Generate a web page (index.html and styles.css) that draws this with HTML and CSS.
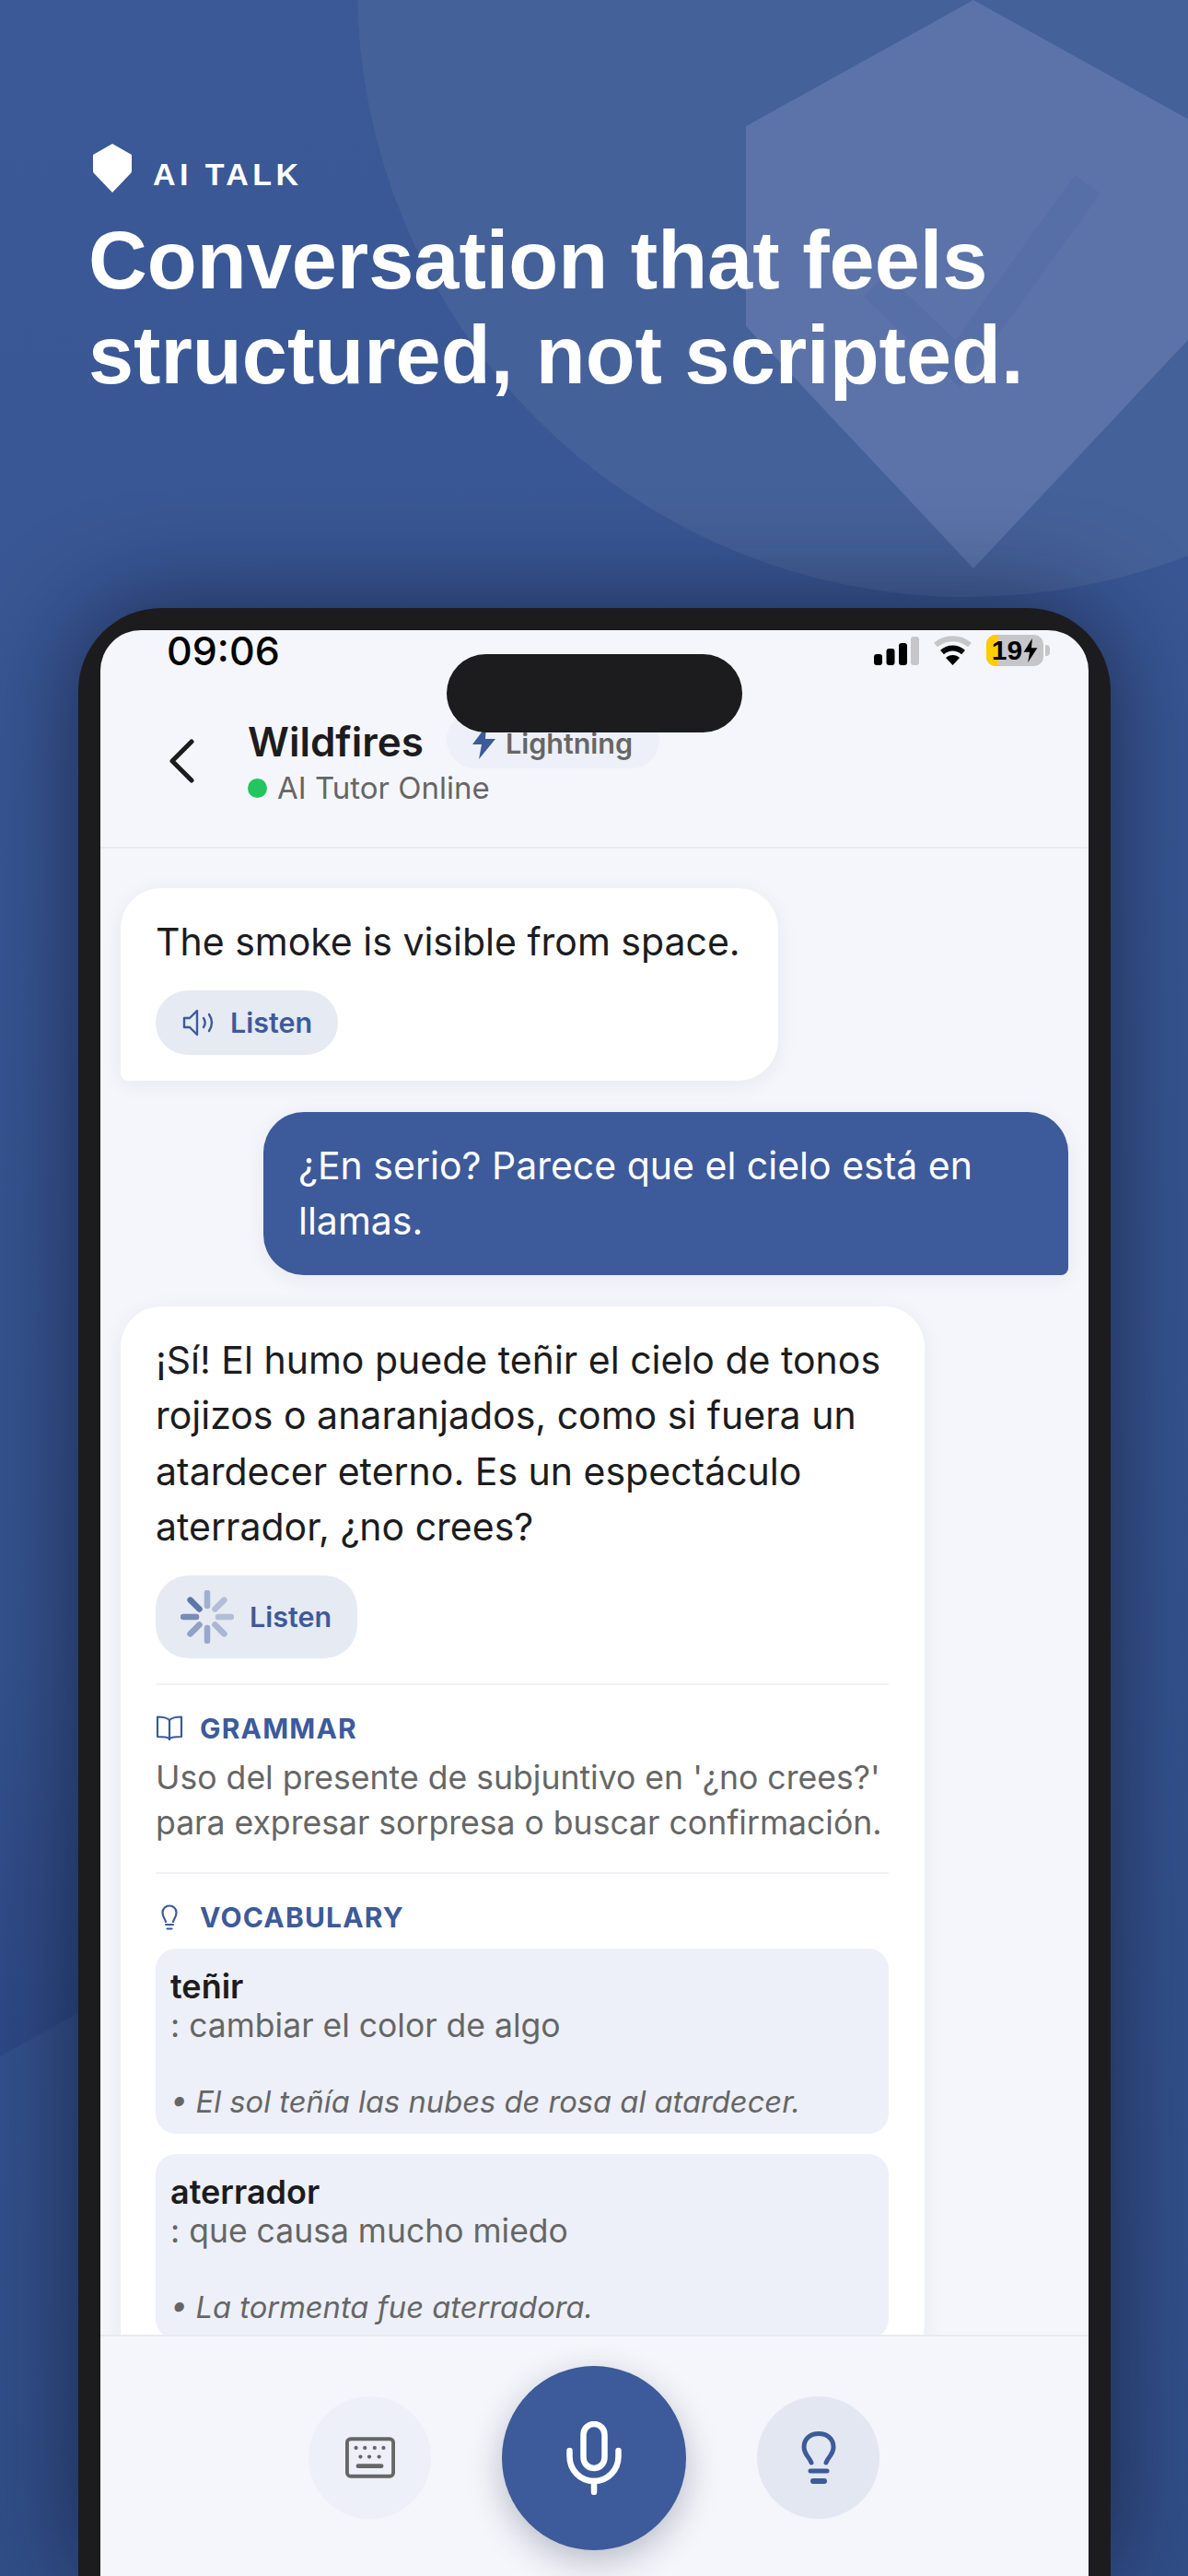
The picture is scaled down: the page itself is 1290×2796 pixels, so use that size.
FILE: index.html
```html
<!DOCTYPE html>
<html lang="en">
<head>
  <meta charset="UTF-8" />
  <meta name="viewport" content="width=device-width, initial-scale=1" />
  <title>AI Talk</title>
  <link rel="stylesheet" href="styles.css">
</head>
<body>
  <div class="poster">
    <svg class="backdrop" viewBox="0 0 1290 2796" aria-hidden="true">
      <defs>
        <linearGradient id="leftShade" x1="0" y1="0" x2="0" y2="1">
          <stop offset="0" stop-color="#2a4480" stop-opacity="0" />
          <stop offset="1" stop-color="#2a4480" stop-opacity=".6" />
        </linearGradient>
      </defs>
      <circle cx="1050" cy="-14" r="662" fill="#456199" />
      <path d="M1057 0 L1304 137 V354 L1057 617 L810 354 V137 Z" fill="#5b73a9" />
      <path d="M950 310 L1040 395 L1181 200" fill="none" stroke="#566fa6" stroke-width="34" />
      <path d="M0 1800 H85 V2185 L0 2232 Z" fill="url(#leftShade)" />
    </svg>

    <header class="hero">
      <div class="brand">
        <svg class="brand-icon" viewBox="0 0 42 53"><path d="M21 0 L42 12 V30 Q42 31 41 32 L21 53 L1 32 Q0 31 0 30 V12 Z" fill="#fff" /></svg>
        <span class="brand-name">AI TALK</span>
      </div>
      <h1>Conversation that feels<br>structured, not scripted.</h1>
    </header>

    <div class="phone">
      <div class="screen">
        <div class="island"></div>

        <div class="status">
          <span class="time">09:06</span>
          <div class="status-icons">
            <svg width="49" height="31" viewBox="0 0 49 31">
              <rect x="0" y="19" width="9" height="12" rx="3" />
              <rect x="13.500" y="13" width="9" height="18" rx="3" />
              <rect x="27" y="7" width="9" height="24" rx="3" />
              <rect x="40" y="0" width="9" height="31" rx="3" fill="#c5c5ca" />
            </svg>
            <svg width="43" height="32" viewBox="0 0 43 32">
              <path d="M3 10 C14 1 29 1 40 10" fill="none" stroke="#c5c5ca" stroke-width="6" />
              <path d="M10 18 C17 12 26 12 33 18" fill="none" stroke="#000" stroke-width="6" />
              <path d="M14 24 C18 20 25 20 29 24 L21.500 32 Z" fill="#000" />
            </svg>
            <div class="battery">
              <div class="battery-level"></div>
              <span class="battery-num">19</span>
              <svg width="16" height="26" viewBox="0 0 16 28"><path d="M10 0 L0 16 H7 L5 28 L16 11 H9 Z" /></svg>
            </div>
          </div>
        </div>

        <div class="topbar">
          <svg class="back" width="30" height="48" viewBox="0 0 30 48"><path d="M26 3 L5 24 L26 45" fill="none" stroke="#1c1c1e" stroke-width="5" stroke-linecap="round" stroke-linejoin="round" /></svg>
          <div class="topbar-text">
            <div class="title-row">
              <span class="topic">Wildfires</span>
              <span class="chip">
                <svg width="28" height="36" viewBox="0 0 28 36"><path d="M17 0 L2 20 H12 L9 36 L27 14 H16 Z" fill="#3d5a9a" /></svg>
                Lightning
              </span>
            </div>
            <div class="online"><span class="dot"></span>AI Tutor Online</div>
          </div>
        </div>

        <div class="chat">
          <div class="bubble bubble-ai bubble-short">
            <p>The smoke is visible from space.</p>
            <button class="listen">
              <svg width="38" height="30" viewBox="0 0 36 30" fill="none" stroke="#3d5a9a" stroke-width="2.4" stroke-linejoin="round" stroke-linecap="round">
                <path d="M2 10 H8 L16 2 V28 L8 20 H2 Z" />
                <path d="M23 10 C25 13 25 17 23 20" />
                <path d="M29 6 C33 12 33 18 29 24" />
              </svg>
              Listen
            </button>
          </div>

          <div class="bubble bubble-user">
            <p>¿En serio? Parece que el cielo está en llamas.</p>
          </div>

          <div class="bubble bubble-ai bubble-long">
            <p>¡Sí! El humo puede teñir el cielo de tonos rojizos o anaranjados, como si fuera un atardecer eterno. Es un espectáculo aterrador, ¿no crees?</p>
            <button class="listen listen-loading">
              <svg width="58" height="58" viewBox="0 0 58 58" stroke="#3d5a9a" stroke-width="6.5" stroke-linecap="round">
                <path d="M29 3 V17" opacity=".4" />
                <path d="M47.4 10.6 L37.5 20.5" opacity=".3" />
                <path d="M55 29 H41" opacity=".3" />
                <path d="M47.4 47.4 L37.5 37.5" opacity=".35" />
                <path d="M29 55 V41" opacity=".45" />
                <path d="M10.6 47.4 L20.5 37.5" opacity=".5" />
                <path d="M3 29 H17" opacity=".65" />
                <path d="M10.6 10.6 L20.5 20.5" opacity=".8" />
              </svg>
              Listen
            </button>

            <section class="note note-grammar">
              <h3>
                <svg width="30" height="28" viewBox="0 0 30 28" fill="none" stroke="#3d5a9a" stroke-width="2.2" stroke-linejoin="round">
                  <path d="M15 5 C12 2 7 1.500 2 1.500 V23 C7 23 12 23 15 25 C18 23 23 23 28 23 V1.500 C23 1.500 18 2 15 5 Z" />
                  <path d="M15 5 V27" />
                </svg>
                GRAMMAR
              </h3>
              <p>Uso del presente de subjuntivo en '¿no crees?' para expresar sorpresa o buscar confirmación.</p>
            </section>

            <section class="note">
              <h3>
                <svg width="30" height="28" viewBox="0 0 30 28" fill="none" stroke="#3d5a9a" stroke-width="2.2" stroke-linecap="round">
                  <path d="M11 19 C10 15 7.500 13.500 7.500 9 C7.500 4.500 11 1.500 15 1.500 C19 1.500 22.500 4.500 22.500 9 C22.500 13.500 20 15 19 19" />
                  <path d="M11 22 H19" />
                  <path d="M12.500 26.500 H17.500" />
                </svg>
                VOCABULARY
              </h3>
              <div class="vocab-card">
                <div class="word">teñir</div>
                <div class="meaning">: cambiar el color de algo</div>
                <div class="sample">• El sol teñía las nubes de rosa al atardecer.</div>
              </div>
              <div class="vocab-card">
                <div class="word">aterrador</div>
                <div class="meaning">: que causa mucho miedo</div>
                <div class="sample">• La tormenta fue aterradora.</div>
              </div>
            </section>
          </div>
        </div>

        <div class="controls">
          <button class="round round-keys">
            <svg width="54" height="45" viewBox="0 0 56 46" fill="none">
              <rect x="2" y="2" width="52" height="42" rx="4" stroke="#666" stroke-width="4" />
              <g fill="#666">
                <circle cx="12" cy="12" r="2.200" /><circle cx="22" cy="12" r="2.200" /><circle cx="33" cy="12" r="2.200" /><circle cx="43" cy="12" r="2.200" />
                <circle cx="17" cy="22" r="2.200" /><circle cx="27" cy="22" r="2.200" /><circle cx="38" cy="22" r="2.200" />
                <rect x="12" y="30" width="31" height="5" rx="2.500" />
              </g>
            </svg>
          </button>
          <button class="round round-mic">
            <svg width="60" height="80" viewBox="0 0 60 80" fill="none" stroke="#fff" stroke-width="6.500" stroke-linecap="round">
              <rect x="18.500" y="3" width="23" height="48" rx="11.500" />
              <path d="M3.500 32 V38 C3.500 53 15 65 30 65 C45 65 56.500 53 56.500 38 V32" />
              <path d="M30 65 V77" />
            </svg>
          </button>
          <button class="round round-hint">
            <svg width="38" height="58" viewBox="0 0 38 58" fill="none" stroke="#3d5a9a" stroke-width="5" stroke-linecap="round">
              <path d="M11 34 C9 28 3 25 3 17 C3 8 10 2.500 19 2.500 C28 2.500 35 8 35 17 C35 25 29 28 27 34" />
              <path d="M10 43 H28" />
              <path d="M13 54 H25" stroke-width="6" />
            </svg>
          </button>
        </div>
      </div>
    </div>
  </div>
</body>
</html>
```

FILE: styles.css
```css
* {
  box-sizing: border-box;
}
body {
  margin: 0;
  font-family: 'Inter', sans-serif;
  color: #1c1c1e;
}
p,
h1,
h3 {
  margin: 0;
}
.poster {
  position: relative;
  width: 1290px;
  height: 2796px;
  overflow: hidden;
  background: linear-gradient(#3b5997, #324f89);
  padding: 156px 84px 0 85px;
}
.backdrop {
  position: absolute;
  left: 0;
  top: 0;
  width: 1290px;
  height: 2796px;
}

/* hero */
.hero {
  position: relative;
  height: 504px;
  color: white;
}
.brand {
  display: flex;
  align-items: center;
  gap: 23px;
  padding-left: 16px;
  height: 53px;
}
.brand-icon {
  width: 42px;
  height: 53px;
  flex: none;
}
.brand-name {
  font-family: 'Liberation Sans', sans-serif;
  font-weight: 700;
  font-size: 34px;
  letter-spacing: 4.400px;
  margin-top: 14px;
}
h1 {
  font-family: 'Liberation Sans', sans-serif;
  font-weight: 700;
  font-size: 88.300px;
  line-height: 103px;
  margin: 22px 0 0 11px;
  white-space: nowrap;
}

/* phone */
.phone {
  position: relative;
  width: 1121px;
  height: 2136px;
  background: #1c1c1e;
  border-radius: 90px 90px 0 0;
  padding: 24px 24px 0;
  box-shadow: 0 0 110px rgba(10, 15, 35, 0.62);
}
.screen {
  position: relative;
  height: 100%;
  background: #f5f6fb;
  border-radius: 44px 44px 0 0;
  display: flex;
  flex-direction: column;
}
.island {
  position: absolute;
  left: 376px;
  top: 26px;
  width: 321px;
  height: 85px;
  background: #1c1c1e;
  border-radius: 43px;
  z-index: 2;
}
.status {
  display: flex;
  justify-content: space-between;
  align-items: center;
  height: 44px;
  padding: 0 49px 0 72px;
  flex: none;
}
.time {
  font-size: 43px;
  line-height: 44px;
  font-weight: 500;
  color: black;
}
.status-icons {
  display: flex;
  align-items: center;
  gap: 15px;
}
.battery {
  position: relative;
  width: 62px;
  height: 34px;
  background: #c5c5ca;
  border-radius: 10px;
  display: flex;
  align-items: center;
  justify-content: center;
  gap: 1px;
  font-family: 'Liberation Sans', sans-serif;
  font-weight: 700;
  font-size: 30px;
  color: black;
}
.battery::after {
  content: "";
  position: absolute;
  right: -7px;
  top: 11px;
  width: 5px;
  height: 12px;
  background: #c5c5ca;
  border-radius: 0 4px 4px 0;
}
.battery-level {
  position: absolute;
  left: 0;
  top: 0;
  bottom: 0;
  width: 13px;
  background: #ffcc00;
  border-radius: 10px 0 0 10px;
}
.battery-num,
.battery svg {
  position: relative;
}

.topbar {
  height: 193px;
  border-bottom: 2px solid #e8eaf0;
  display: flex;
  align-items: flex-start;
  padding: 47px 0 0 73px;
  gap: 57px;
  flex: none;
}
.back {
  margin-top: 27px;
  flex: none;
}
.title-row {
  display: flex;
  align-items: center;
  gap: 25px;
  height: 60px;
}
.topic {
  font-size: 44px;
  font-weight: 600;
}
.chip {
  display: flex;
  align-items: center;
  gap: 10px;
  height: 62px;
  margin-top: -4px;
  padding: 6px 29px 0 26px;
  border-radius: 31px;
  background: #edf0f8;
  color: #666;
  font-size: 30.500px;
  font-weight: 600;
}
.online {
  display: flex;
  align-items: center;
  gap: 11px;
  font-size: 33px;
  color: #666;
}
.dot {
  width: 21px;
  height: 21px;
  border-radius: 50%;
  background: #22c55e;
}

/* chat */
.chat {
  flex: 1;
  min-height: 0;
  overflow: hidden;
  padding: 43px 22px 0;
  display: flex;
  flex-direction: column;
  align-items: flex-start;
  gap: 34px;
}
.bubble {
  flex: none;
  font-size: 41px;
  line-height: 60.500px;
  border-radius: 44px;
  padding: 28px 39px 28px 38px;
  box-shadow: 0 4px 24px rgba(30, 40, 70, 0.06);
}
.bubble-ai {
  background: white;
  border-bottom-left-radius: 8px;
}
.bubble-user {
  align-self: flex-end;
  width: 874px;
  background: #3d5a9a;
  color: white;
  border-bottom-right-radius: 8px;
}
.bubble-short {
  width: 714px;
}
.bubble-long {
  width: 873px;
}
.listen {
  display: flex;
  align-items: center;
  gap: 15px;
  margin-top: 22px;
  height: 70px;
  padding: 0 28px;
  border: none;
  border-radius: 35px;
  background: #e6eaf3;
  color: #3d5a9a;
  font-family: inherit;
  font-size: 30.500px;
  font-weight: 600;
}
.listen-loading {
  height: 90px;
  border-radius: 36px;
  gap: 17px;
  padding: 0 28px 0 27px;
}

.note {
  font-size: 35.600px;
  line-height: 49px;
  color: #666;
}
.note-grammar {
  border-top: 2px solid #f0f2f6;
  margin-top: 27px;
  padding: 29px 0 29px;
  border-bottom: 2px solid #f0f2f6;
}
.note h3 {
  display: flex;
  align-items: center;
  gap: 18px;
  color: #3d5a9a;
  font-size: 30px;
  line-height: 36px;
  font-weight: 700;
  letter-spacing: 1.200px;
}
.note-grammar h3 {
  margin-bottom: 11px;
}
.note:not(.note-grammar) {
  padding-top: 29px;
}
.vocab-card {
  background: #edf0f8;
  border-radius: 22px;
  padding: 20px 16px;
  margin-top: 16px;
  height: 201px;
}
.vocab-card + .vocab-card {
  margin-top: 22px;
}
.word {
  color: #1c1c1e;
  font-size: 36px;
  font-weight: 600;
  line-height: 42px;
}
.meaning {
  font-size: 35.500px;
  line-height: 44px;
}
.sample {
  font-size: 32.700px;
  font-style: italic;
  line-height: 44px;
  margin-top: 38px;
}

/* bottom controls */
.controls {
  position: absolute;
  left: 0;
  right: 0;
  bottom: 0;
  height: 262px;
  background: #f5f6fb;
  border-top: 2px solid #e8eaf0;
  display: flex;
  justify-content: center;
  gap: 77px;
  padding: 32px 1px 0 0;
}
.round {
  border: none;
  border-radius: 50%;
  padding: 0;
  display: flex;
  align-items: center;
  justify-content: center;
  flex: none;
}
.round-keys,
.round-hint {
  width: 133px;
  height: 133px;
  margin-top: 33px;
}
.round-keys {
  background: #edf0f8;
}
.round-hint {
  background: #e3e7f2;
}
.round-mic {
  width: 200px;
  height: 200px;
  background: #3d5a9a;
  box-shadow: 0 12px 36px rgba(30, 40, 70, 0.28);
}
```
